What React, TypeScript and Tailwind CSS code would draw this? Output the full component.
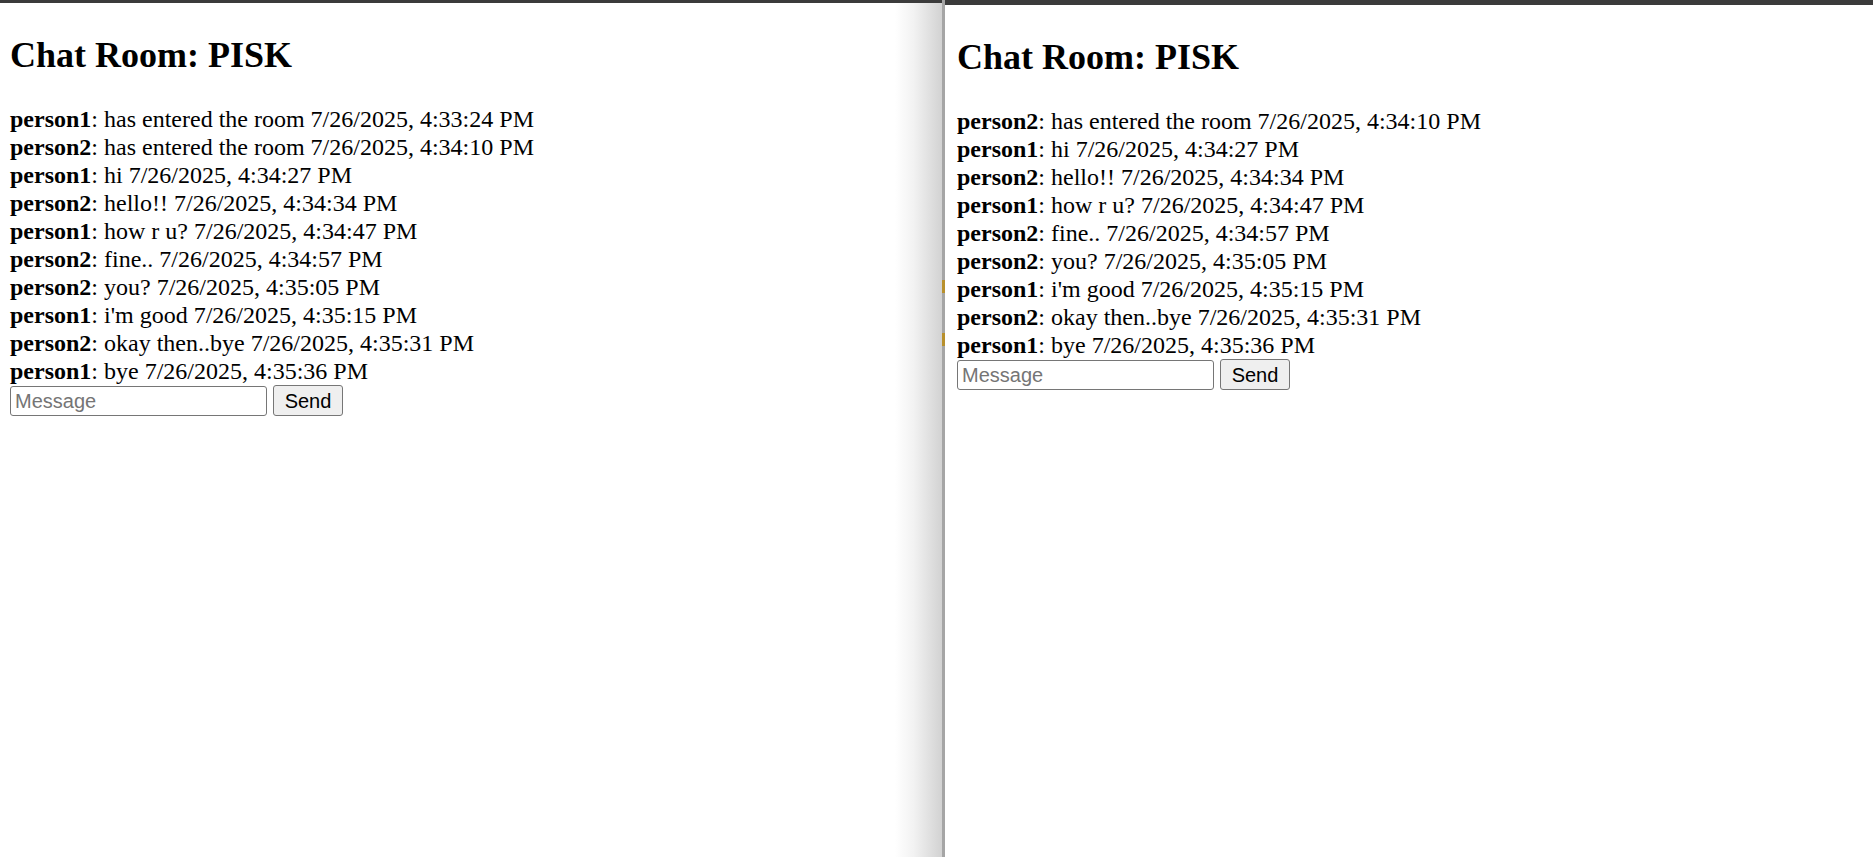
import React from 'react';

interface ChatMessage {
    user: string;
    text: string;
    time: string;
}

const leftMessages: ChatMessage[] = [
    { user: 'person1', text: 'has entered the room', time: '7/26/2025, 4:33:24 PM' },
    { user: 'person2', text: 'has entered the room', time: '7/26/2025, 4:34:10 PM' },
    { user: 'person1', text: 'hi', time: '7/26/2025, 4:34:27 PM' },
    { user: 'person2', text: 'hello!!', time: '7/26/2025, 4:34:34 PM' },
    { user: 'person1', text: 'how r u?', time: '7/26/2025, 4:34:47 PM' },
    { user: 'person2', text: 'fine..', time: '7/26/2025, 4:34:57 PM' },
    { user: 'person2', text: 'you?', time: '7/26/2025, 4:35:05 PM' },
    { user: 'person1', text: "i'm good", time: '7/26/2025, 4:35:15 PM' },
    { user: 'person2', text: 'okay then..bye', time: '7/26/2025, 4:35:31 PM' },
    { user: 'person1', text: 'bye', time: '7/26/2025, 4:35:36 PM' },
];

const rightMessages = leftMessages.slice(1);

const ChatRoom = ({ messages }: { messages: ChatMessage[] }) => (
    <div className="font-['Liberation_Serif',serif] text-black">
        <h1 className="text-[36px] leading-[41px] font-bold">Chat Room: PISK</h1>

        <div className="mt-[29px] text-[24px] leading-[28px]">
            {messages.map((msg, i) => (
                <div key={i} className="whitespace-nowrap">
                    <b>{msg.user}</b>: {msg.text} {msg.time}
                </div>
            ))}
        </div>

        <div className="flex items-center gap-[6px] font-['Liberation_Sans',Arial,sans-serif] text-[20px]">
            <input
                placeholder="Message"
                className="w-[257px] h-[30px] px-[4px] border border-[#767676] rounded-[3px] bg-white text-black placeholder:text-[#757575] outline-none"
            />
            <button className="w-[70px] h-[31px] border border-[#767676] rounded-[3px] bg-[#efefef] text-black leading-none">
                Send
            </button>
        </div>
    </div>
);

export default function App() {
    return (
        <div className="flex w-[1873px] h-[857px] overflow-hidden bg-white">
            {/* Left window, with the shadow of the right one on its edge */}
            <div className="flex flex-col w-[942px] shrink-0 bg-[linear-gradient(to_right,#ffffff_95%,#f2f2f2_97%,#d2d2d2)]">
                <div className="h-[3px] bg-[#3b3b3b]" />
                <div className="pl-[10px] pt-[32px]">
                    <ChatRoom messages={leftMessages} />
                </div>
            </div>

            {/* Window border */}
            <div className="flex flex-col w-[3px] shrink-0 bg-[#a5a5a5]">
                <div className="h-[280px]" />
                <div className="h-[13px] bg-[#b8902c]" />
                <div className="h-[40px]" />
                <div className="h-[13px] bg-[#b8902c]" />
            </div>

            {/* Right window */}
            <div className="flex flex-col flex-1">
                <div className="h-[5px] bg-[#3b3b3b]" />
                <div className="pl-[12px] pt-[32px]">
                    <ChatRoom messages={rightMessages} />
                </div>
            </div>
        </div>
    );
}
